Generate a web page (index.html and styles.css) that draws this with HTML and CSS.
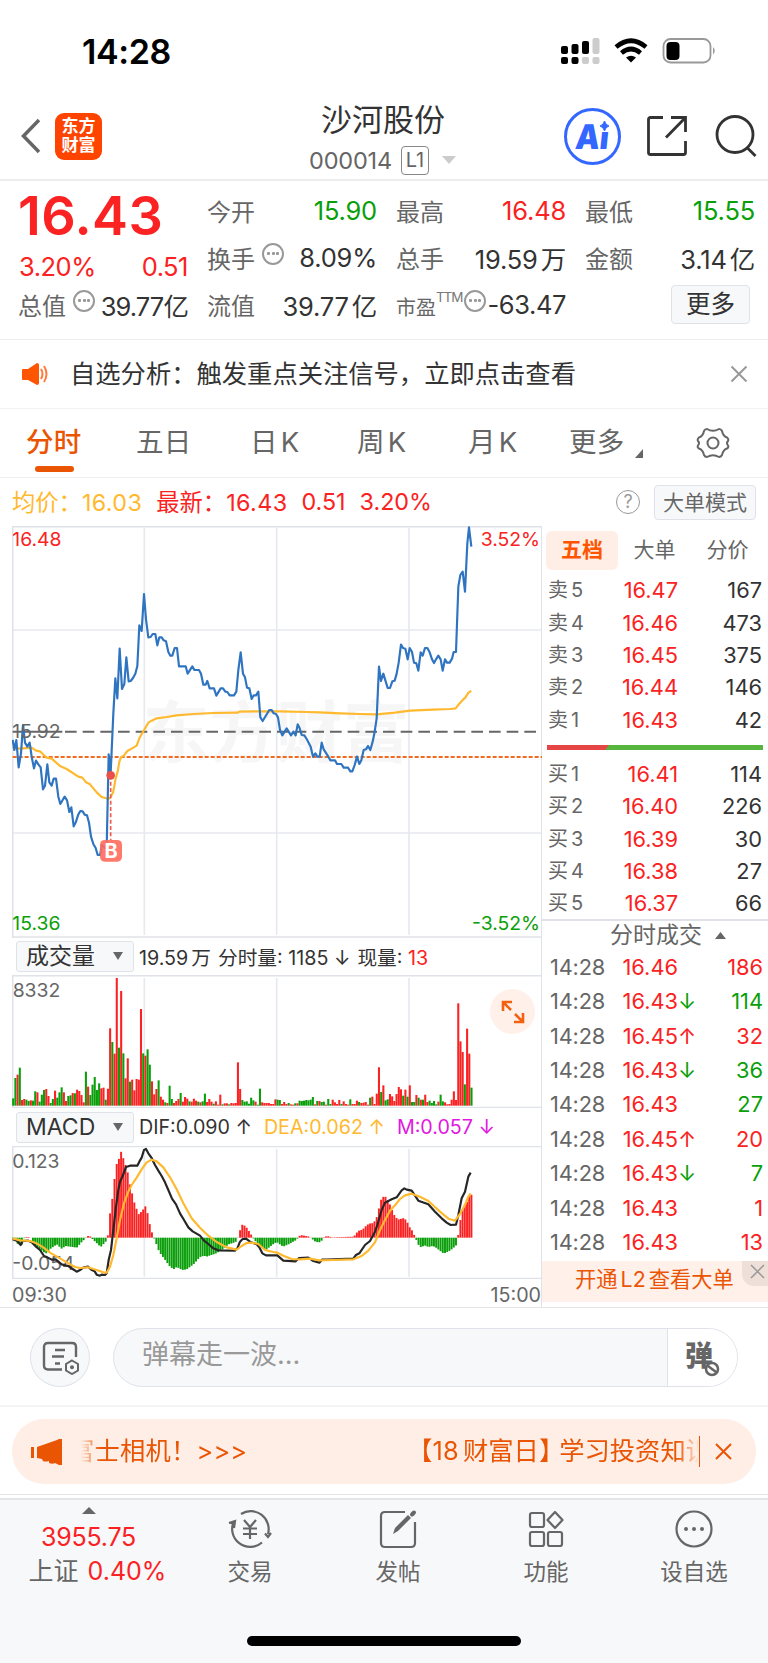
FILE: index.html
```html
<!DOCTYPE html>
<html lang="zh-CN">

<head>
    <meta charset="UTF-8">
    <meta name="viewport" content="width=device-width, initial-scale=1.0">
    <title>沙河股份 000014</title>
    <link rel="stylesheet" href="styles.css">
</head>

<body>
    <div class="status-bar">
        <span class="time">14:28</span>
        <svg class="status-icons" width="156" height="28" viewBox="0 0 156 28">
            <g fill="#000">
                <rect x="1" y="9" width="7" height="8" rx="2" />
                <rect x="11.500" y="7" width="7" height="10" rx="2" />
                <rect x="22" y="4" width="7" height="13" rx="2" />
                <rect x="1" y="20" width="7" height="7" rx="2" />
                <rect x="11.500" y="20" width="7" height="7" rx="2" />
            </g>
            <g fill="#ccc">
                <rect x="32.500" y="1" width="7" height="16" rx="2" />
                <rect x="22" y="20" width="7" height="7" rx="2" />
                <rect x="32.500" y="20" width="7" height="7" rx="2" />
            </g>
            <g fill="none" stroke="#000" stroke-width="4.600">
                <path d="M56 10 Q71 -2.500 86 10" />
                <path d="M61.500 16 Q71 8 80.500 16" />
            </g>
            <path d="M66 20.500 Q71 17 76 20.500 L71 25.500 Z" />
            <rect x="103.500" y="2" width="47" height="23.500" rx="7" fill="none" stroke="#999" stroke-width="1.800" />
            <rect x="106.500" y="5" width="13" height="18" rx="4" />
            <path d="M153 10 Q156.500 13.500 153 17.500 Z" fill="#999" />
        </svg>
    </div>

    <div class="header">
        <div class="header-left">
            <svg width="20" height="36" viewBox="0 0 20 36" fill="none" stroke="#666" stroke-width="3.500">
                <path d="M18 2 L2.500 18 L18 34" />
            </svg>
            <div class="logo">东方<br>财富</div>
        </div>
        <div class="header-title">
            <h1>沙河股份</h1>
            <div class="code">
                <span>000014</span>
                <span class="level">L1</span>
                <svg width="14" height="8" viewBox="0 0 14 8"><path d="M0 0 H14 L7 8 Z" fill="#ccc" /></svg>
            </div>
        </div>
        <div class="header-right">
            <div class="ai">
                <span>Ai</span>
                <svg class="spark" width="11" height="12" viewBox="0 0 11 12"><path d="M5.500 1 Q6.500 5 10 6 Q6.500 7 5.500 11 Q4.500 7 1 6 Q4.500 5 5.500 1 Z" fill="#3367ff" stroke="#3367ff" /></svg>
            </div>
            <svg width="42" height="42" viewBox="0 0 42 42" fill="none" stroke="#333" stroke-width="2.800">
                <path d="M17 2.500 H4.500 Q2.500 2.500 2.500 4.500 V37.500 Q2.500 39.500 4.500 39.500 H37.500 Q39.500 39.500 39.500 37.500 V26" />
                <path d="M25 2.500 H39.500 V17 M39.500 2.500 L20 22.500" />
            </svg>
            <svg width="44" height="42" viewBox="0 0 44 42" fill="none" stroke="#333" stroke-width="2.800">
                <circle cx="21" cy="19.500" r="18" />
                <path d="M33 32.500 L41.500 41" />
            </svg>
        </div>
    </div>

    <div class="quote">
        <div class="quote-main">
            <div class="price">16.43</div>
            <div class="change"><span>3.20%</span><span>0.51</span></div>
            <div class="cell"><label>总值</label><i class="more-dot"></i><b>39.77亿</b></div>
        </div>
        <div class="quote-grid">
            <div class="cell"><label>今开</label><b class="green">15.90</b></div>
            <div class="cell"><label>最高</label><b class="red">16.48</b></div>
            <div class="cell"><label>最低</label><b class="green">15.55</b></div>
            <div class="cell"><label>换手</label><i class="more-dot"></i><b>8.09%</b></div>
            <div class="cell"><label>总手</label><b>19.59<span class="unit">万</span></b></div>
            <div class="cell"><label>金额</label><b>3.14<span class="unit">亿</span></b></div>
            <div class="cell"><label>流值</label><b>39.77<span class="unit">亿</span></b></div>
            <div class="cell pe"><label>市盈</label><sup>TTM</sup><i class="more-dot"></i><b>-63.47</b></div>
            <div class="cell"><button class="btn-more">更多</button></div>
        </div>
    </div>

    <div class="notice">
        <svg width="28" height="24" viewBox="0 0 28 24">
            <path d="M1 7 H6 L15 1 Q17 1 17 3 V21 Q17 23 15 23 L6 18 H1 Q0 18 0 17 V8 Q0 7 1 7 Z" fill="#ff5500" />
            <path d="M19 7 Q22 12 19 17 M22 4 Q27 12 22 20" fill="none" stroke="#ff7a3c" stroke-width="2" />
        </svg>
        <span>自选分析：触发重点关注信号，立即点击查看</span>
        <svg width="18" height="18" viewBox="0 0 18 18" stroke="#999" stroke-width="2"><path d="M1.500 1.500 L16.500 16.500 M16.500 1.500 L1.500 16.500" /></svg>
    </div>

    <div class="tabs">
        <span class="tab active">分时</span>
        <span class="tab">五日</span>
        <span class="tab">日<span class="unit">K</span></span>
        <span class="tab">周<span class="unit">K</span></span>
        <span class="tab">月<span class="unit">K</span></span>
        <span class="tab">更多<svg width="8" height="9" viewBox="0 0 8 9"><path d="M8 0 V9 H0 Z" fill="#666" /></svg></span>
        <svg class="gear" width="34" height="32" viewBox="0 0 34 32" fill="none" stroke="#666" stroke-width="2">
            <path d="M11 2 Q17 5.500 23 2 Q25 2 26 4 Q27 9 31 10.500 Q33 12 32 14 Q30 16 32 18.500 Q33 20.500 31 21.500 Q27 23 26 28 Q25 30 23 30 Q17 26.500 11 30 Q9 30 8 28 Q7 23 3 21.500 Q1 20.500 2 18.500 Q4 16 2 14 Q1 12 3 10.500 Q7 9 8 4 Q9 2 11 2 Z" />
            <circle cx="17" cy="16" r="5.500" />
        </svg>
    </div>

    <div class="summary">
        <span class="avg">均价：<span class="num">16.03</span></span>
        <span class="red">最新：<span class="num">16.43</span></span>
        <span class="red">0.51</span>
        <span class="red">3.20%</span>
        <i class="help">?</i>
        <button class="btn-mode">大单模式</button>
    </div>

    <div class="market">
        <div class="charts">
            <!-- chart units: 3 per pixel -->
            <svg class="chart" width="530" height="412" viewBox="36 18 1590 1236">
                <text class="watermark" x="428" y="712">东方财富</text>
                <g class="grid">
                    <path d="M38 330 H1624 M38 939 H1624 M433 24 V1245 M830 24 V1245 M1227 24 V1245" />
                    <path class="frame" d="M38 1254 V20 H1626 M38 1251 H1626" />
                </g>
                <path d="M195 635 H1615" stroke="#666" stroke-width="6" stroke-dasharray="35 18" />
                <path d="M38 635 H187" stroke="#666" stroke-width="6" />
                <path d="M38 711 H1626" stroke="#f26a21" stroke-width="6" stroke-dasharray="12 6" />
                <polyline class="line avg-line" points="38,683 60,686 95,683 108,692 120,694 140,713 155,716 180,738 200,747 235,770 247,773 258,787 270,793 290,817 305,831 318,835 330,835 340,815 347,775 353,755 358,725 363,712 372,706 382,693 395,686 410,677 418,655 430,634 445,608 455,602 470,595 500,591 530,586 580,582 640,579 712,578 718,575 780,574 840,574 920,576 960,577 1020,580 1080,582 1130,583 1185,578 1230,572 1300,569 1350,567 1367,565 1377,552 1389,539 1396,533 1405,518 1414,513" />
                <polyline class="line price-line" points="38,660 43,690 49,660 56,742 63,700 69,615 75,668 82,680 89,668 95,710 102,745 108,722 115,733 122,742 129,808 135,797 142,733 148,787 155,797 161,776 168,776 175,830 181,852 188,840 194,830 201,841 208,876 214,862 221,919 228,905 235,883 241,873 248,874 254,884 261,886 267,908 273,950 280,972 287,984 293,1005 300,1005 306,975 313,982 320,985 326,703 332,760 340,580 346,475 352,535 359,386 366,507 373,492 379,412 386,484 392,483 399,474 406,461 412,438 418,316 425,333 432,222 438,298 445,352 452,351 458,342 466,342 472,376 478,352 485,352 491,361 498,364 505,396 511,407 517,407 524,384 531,384 537,439 557,439 563,461 577,439 583,450 597,450 603,461 610,494 617,494 622,483 629,505 642,505 649,527 662,505 669,505 676,515 682,516 689,526 702,526 709,515 715,450 722,397 729,461 735,472 741,503 748,505 755,537 761,526 768,526 775,515 781,592 788,603 808,570 815,570 821,580 828,582 834,592 840,630 847,646 860,625 873,646 880,635 887,646 893,613 899,625 905,645 913,646 920,657 932,680 939,710 946,700 952,710 959,710 965,668 971,688 985,710 991,721 1005,721 1011,732 1024,732 1031,743 1044,743 1051,754 1057,754 1064,735 1071,710 1078,732 1084,721 1091,690 1098,688 1104,678 1111,690 1118,665 1124,635 1130,595 1137,440 1143,483 1150,461 1157,484 1163,504 1170,504 1177,484 1184,482 1190,461 1196,428 1203,374 1209,384 1216,386 1223,418 1229,384 1236,396 1242,428 1249,430 1255,452 1262,397 1268,407 1275,384 1282,384 1289,397 1296,418 1302,429 1308,418 1315,407 1322,418 1328,452 1335,418 1341,428 1349,428 1356,416 1361,396 1368,396 1375,200 1381,165 1388,155 1395,215 1402,70 1407,22 1414,80" />
                <path d="M332 766 V960" stroke="#f25a4e" stroke-width="5" stroke-dasharray="12 7" />
                <circle cx="332" cy="766" r="13" fill="#ea4f4a" />
                <rect x="300" y="960" width="66" height="65" rx="14" fill="#ff6a5c" fill-opacity=".9" />
                <text x="333" y="1015" text-anchor="middle" class="buy-mark">B</text>
                <text class="axis up" x="37" y="77">16.48</text>
                <text class="axis" x="37" y="654">15.92</text>
                <text class="axis down" x="37" y="1229">15.36</text>
                <text class="axis up" x="1620" y="77" text-anchor="end">3.52%</text>
                <text class="axis down" x="1620" y="1229" text-anchor="end">-3.52%</text>
            </svg>

            <div class="indicator">
                <div class="select">成交量<i></i></div>
                <span>19.59<span class="unit">万</span></span>
                <span>分时量: 1185 ↓</span>
                <span>现量: <em>13</em></span>
            </div>
            <div class="chart-wrap">
                <svg class="chart" width="530" height="133" viewBox="36 135 1590 399">
                    <g class="grid">
                        <path d="M433 144 V527 M830 144 V527 M1227 144 V527" />
                        <path class="frame" d="M38 534 V137 H1626 M38 533 H1626" />
                    </g>
                    <g id="volume"></g>
                    <text class="axis" x="38" y="201">8332</text>
                </svg>
                <div class="expand">
                    <svg width="24" height="24" viewBox="0 0 24 24" fill="none" stroke="#f26010" stroke-width="2.600">
                        <path d="M2 11 V2 H11 M2 2 L10 10 M22 13 V22 H13 M22 22 L14 14" />
                    </svg>
                </div>
            </div>

            <div class="indicator macd">
                <div class="select">MACD<i></i></div>
                <span>DIF:0.090 ↑</span>
                <span class="avg">DEA:0.062 ↑</span>
                <span class="magenta">M:0.057 ↓</span>
            </div>
            <svg class="chart" width="530" height="133" viewBox="36 648 1590 399">
                <g class="grid">
                    <path d="M433 657 V1040 M830 657 V1040 M1227 657 V1040" />
                    <path class="frame" d="M38 1047 V649 H1626 M38 1046 H1626" />
                </g>
                <g id="macd"></g>
                <text class="axis" x="37" y="714">0.123</text>
                <text class="axis" x="37" y="1020">-0.054</text>
                <polyline class="line dif" points="38,928 52,933 62,945 68,933 85,932 95,937 108,950 120,960 132,978 142,982 155,989 167,988 185,1003 205,1008 218,1017 230,1025 240,1020 250,1013 264,1010 274,1019 284,1024 290,1034 300,1037 305,1034 315,1035 320,1030 326,990 333,960 340,900 348,830 355,780 360,755 368,738 378,711 390,707 412,707 418,695 425,683 432,660 438,657 445,670 455,684 465,705 475,722 485,738 495,757 505,780 516,806 528,823 540,850 552,870 565,892 578,904 600,917 612,932 625,942 640,955 655,961 705,962 712,955 720,935 728,927 738,926 750,935 770,943 778,952 787,970 798,976 832,976 850,992 887,994 897,984 925,983 940,993 958,998 966,989 980,989 1060,986 1068,975 1078,970 1095,945 1110,933 1125,905 1132,885 1145,840 1155,818 1175,808 1190,802 1205,781 1213,775 1220,779 1235,782 1255,812 1285,823 1305,845 1325,865 1340,878 1352,885 1368,884 1375,855 1385,805 1395,785 1405,740 1412,728" />
                <polyline class="line avg-line" points="38,925 60,931 90,933 110,940 130,952 150,968 175,982 200,997 225,1011 240,1014 264,1012 290,1020 310,1027 320,1028 330,1010 340,975 350,925 360,870 372,820 385,785 395,765 410,743 425,718 440,697 455,689 470,694 490,712 510,742 530,778 550,820 575,865 600,893 625,917 650,936 680,952 710,959 725,948 740,939 755,938 775,942 795,960 820,966 832,968 850,977 875,987 900,988 930,986 958,991 1000,990 1060,988 1085,978 1105,962 1125,937 1140,900 1155,870 1170,842 1185,826 1200,807 1215,796 1235,791 1260,800 1285,813 1320,845 1345,866 1365,872 1380,852 1395,825 1405,800 1412,790" />
            </svg>
            <div class="hours"><span>09:30</span><span>15:00</span></div>
        </div>

        <div class="side">
            <div class="side-tabs">
                <span class="on">五档</span>
                <span>大单</span>
                <span>分价</span>
            </div>
            <div class="book">
                <div class="level-row"><span>卖5</span><b>16.47</b><em>167</em></div>
                <div class="level-row"><span>卖4</span><b>16.46</b><em>473</em></div>
                <div class="level-row"><span>卖3</span><b>16.45</b><em>375</em></div>
                <div class="level-row"><span>卖2</span><b>16.44</b><em>146</em></div>
                <div class="level-row"><span>卖1</span><b>16.43</b><em>42</em></div>
            </div>
            <svg class="ratio" width="216" height="5" viewBox="0 0 216 5">
                <rect width="216" height="5" fill="#55b53c" />
                <path d="M0 0 H62 L58 5 H0 Z" fill="#e54545" />
            </svg>
            <div class="book">
                <div class="level-row"><span>买1</span><b>16.41</b><em>114</em></div>
                <div class="level-row"><span>买2</span><b>16.40</b><em>226</em></div>
                <div class="level-row"><span>买3</span><b>16.39</b><em>30</em></div>
                <div class="level-row"><span>买4</span><b>16.38</b><em>27</em></div>
                <div class="level-row"><span>买5</span><b>16.37</b><em>66</em></div>
            </div>
            <div class="deals-title">分时成交 <svg width="11" height="7" viewBox="0 0 11 7"><path d="M5.500 0 L11 7 H0 Z" fill="#666" /></svg></div>
            <div class="deals">
                <div class="deal"><span>14:28</span><b>16.46</b><i></i><em class="red">186</em></div>
                <div class="deal"><span>14:28</span><b>16.43</b><i class="green">↓</i><em class="green">114</em></div>
                <div class="deal"><span>14:28</span><b>16.45</b><i class="red">↑</i><em class="red">32</em></div>
                <div class="deal"><span>14:28</span><b>16.43</b><i class="green">↓</i><em class="green">36</em></div>
                <div class="deal"><span>14:28</span><b>16.43</b><i></i><em class="green">27</em></div>
                <div class="deal"><span>14:28</span><b>16.45</b><i class="red">↑</i><em class="red">20</em></div>
                <div class="deal"><span>14:28</span><b>16.43</b><i class="green">↓</i><em class="green">7</em></div>
                <div class="deal"><span>14:28</span><b>16.43</b><i></i><em class="red">1</em></div>
                <div class="deal"><span>14:28</span><b>16.43</b><i></i><em class="red">13</em></div>
            </div>
            <div class="promo">
                开通<span class="unit">L2</span><span class="unit">查看大单</span>
                <div class="promo-close">
                    <svg width="15" height="15" viewBox="0 0 15 15" stroke="#999" stroke-width="1.500"><path d="M1 1 L14 14 M14 1 L1 14" /></svg>
                </div>
            </div>
        </div>
    </div>

    <div class="danmu">
        <div class="danmu-set">
            <svg width="38" height="34" viewBox="0 0 38 34" fill="none" stroke="#666" stroke-width="2.400">
                <path d="M20 28.500 H6 Q2 28.500 2 24.500 V6 Q2 2 6 2 H30 Q34 2 34 6 V16" />
                <path d="M13 9 H23 M10 15.500 H22 M13 22.500 H18" />
                <path d="M30 19.500 L36 23 V29.500 L30 33 L24 29.500 V23 Z" stroke-width="2" />
                <circle cx="30" cy="26.300" r="2" fill="#666" stroke="none" />
            </svg>
        </div>
        <div class="danmu-input">
            <span>弹幕走一波...</span>
            <div class="danmu-switch">
                弹
                <svg width="16" height="16" viewBox="0 0 16 16"><circle cx="8" cy="8" r="6" fill="#fff" stroke="#666" stroke-width="2.600" /><path d="M4 5 L12 11" stroke="#666" stroke-width="2.600" /></svg>
            </div>
        </div>
    </div>

    <div class="banner-wrap">
        <div class="banner">
            <svg width="32" height="28" viewBox="0 0 32 28" fill="#ea5504">
                <path d="M0 9 H3 V20 H0 Z M6 9 L26 2 L28 1 H31 V27 H28 L24 25 Q22 26.500 18 25 V23 Q14 24 12 23 L11 21 L6 20 Z" />
            </svg>
            <div class="marquee">
                <span class="msg-a">富士相机！&gt;&gt;&gt;</span>
                <span class="msg-b">【<span class="day">18</span>财富日<span class="bracket">】</span>学习投资知识</span>
            </div>
            <svg class="banner-close" width="17" height="17" viewBox="0 0 17 17" stroke="#ea5504" stroke-width="2"><path d="M1 1 L16 16 M16 1 L1 16" /></svg>
        </div>
    </div>

    <div class="nav">
        <div class="nav-index">
            <svg width="14" height="7" viewBox="0 0 14 7"><path d="M7 0 L14 7 H0 Z" fill="#666" /></svg>
            <b>3955.75</b>
            <span>上证 <b>0.40%</b></span>
        </div>
        <div class="nav-item">
            <svg width="44" height="40" viewBox="0 0 44 40" fill="none" stroke="#666" stroke-width="2.200">
                <path d="M13 5 A18 18 0 0 1 40 25 M37 24.500 L40 28 L43 24 M34 33.500 A18 18 0 0 1 6 12 M1 14 L7 12 L6 19" />
                <path d="M16 11 L22 18 L28 11 M22 18 V30 M15 19.500 H29 M15 25 H29" />
            </svg>
            <span>交易</span>
        </div>
        <div class="nav-item">
            <svg width="44" height="40" viewBox="0 0 44 40" fill="none" stroke="#666" stroke-width="2.200">
                <path d="M29 3 H9 Q5 3 5 7 V34 Q5 38 9 38 H35 Q39 38 39 34 V13" />
                <path d="M17 25 L19 19 L32 6 L35 9 L22 22 Z" fill="#666" stroke="none" />
                <path d="M36 5.500 L38 3.500" stroke-width="4" stroke-linecap="round" />
            </svg>
            <span>发帖</span>
        </div>
        <div class="nav-item">
            <svg width="44" height="40" viewBox="0 0 44 40" fill="none" stroke="#666" stroke-width="2.200">
                <rect x="6" y="4" width="14" height="14" rx="2" />
                <rect x="6" y="23" width="14" height="14" rx="2" />
                <rect x="24" y="23" width="14" height="14" rx="2" />
                <path d="M31 3 L38.500 11 L31 19 L23.500 11 Z" stroke-linejoin="round" />
            </svg>
            <span>功能</span>
        </div>
        <div class="nav-item">
            <svg width="44" height="40" viewBox="0 0 44 40" fill="none" stroke="#666" stroke-width="2.200">
                <circle cx="22" cy="20" r="17.500" />
                <g fill="#666" stroke="none"><circle cx="14" cy="20" r="2" /><circle cx="22" cy="20" r="2" /><circle cx="30" cy="20" r="2" /></g>
            </svg>
            <span>设自选</span>
        </div>
    </div>
    <div class="home-bar"></div>

    <script src="chart.js"></script>
</body>

</html>
```

FILE: styles.css
```css
* {
    box-sizing: border-box;
}

body {
    margin: 0;
    width: 768px;
    height: 1663px;
    overflow: hidden;
    background: #fff;
    color: #333;
    font-family: Inter, "Noto Sans CJK SC", sans-serif;
}

svg {
    display: block;
    flex: none;
}

b, em, i {
    font-weight: normal;
    font-style: normal;
}

button {
    padding: 0;
    font-family: inherit;
    background: #f7f8fa;
    border: 1px solid #dfe2e8;
    border-radius: 4px;
}

.red {
    color: #fa2222;
}

.green {
    color: #0a9f0a;
}

.avg {
    color: #ffb92e;
}

.magenta {
    color: #e018e0;
}

/* gap between chinese and latin text */
.unit {
    margin-left: 3px;
}

/* status bar */
.status-bar {
    height: 90px;
    padding: 37px 52px 0 82px;
    display: flex;
    justify-content: space-between;
}

.time {
    font-size: 34px;
    line-height: 29px;
    font-weight: 600;
    letter-spacing: -0.4px;
    color: #000;
}

/* header */
.header {
    height: 91px;
    padding: 2px 10px 0 21px;
    border-bottom: 2px solid #ececec;
    display: grid;
    grid-template-columns: 221px 1fr 200px;
}

.header-left {
    display: flex;
    align-items: center;
    gap: 14px;
}

.logo {
    width: 47px;
    height: 47px;
    border-radius: 9px;
    background: #ff4400;
    color: #fff;
    font-size: 17px;
    line-height: 19px;
    font-weight: 700;
    text-align: center;
    padding-top: 4px;
}

.header-title {
    text-align: center;
    padding-top: 7px;
}

h1 {
    margin: 0 0 0 -34px;
    font-size: 31px;
    line-height: 41px;
    font-weight: 400;
}

.code {
    display: flex;
    align-items: center;
    justify-content: center;
    gap: 9px;
    height: 40px;
    margin-left: -35px;
    font-size: 23.500px;
    letter-spacing: -0.2px;
    color: #666;
}

.code svg {
    margin-left: 4px;
}

.level {
    width: 28px;
    height: 29px;
    border: 1.5px solid #888;
    border-radius: 4px;
    font-size: 20px;
    line-height: 27px;
}

.header-right {
    display: flex;
    align-items: center;
    justify-content: flex-end;
    gap: 25px;
}

.header-right > svg:last-child {
    margin-left: 1px;
}

.ai {
    position: relative;
    width: 57px;
    height: 57px;
    border: 3px solid #3367ff;
    border-radius: 50%;
    color: #3367ff;
    font-size: 34px;
    line-height: 51px;
    font-weight: 900;
    text-align: center;
}

.ai span {
    display: block;
    transform: skewX(-6deg) scaleX(0.9);
}

.spark {
    position: absolute;
    left: 32px;
    top: 9px;
    background: #fff;
}

/* quote */
.quote {
    height: 159px;
    padding: 7px 13px 0 19px;
    border-bottom: 1px solid #eee;
    display: grid;
    grid-template-columns: 169px 1fr;
    gap: 20px;
}

.quote-main .price {
    height: 54px;
    font-size: 54px;
    line-height: 55px;
    font-weight: 600;
    letter-spacing: 0.4px;
    color: #fa2222;
    margin-left: -1px;
}

.quote-main .change {
    display: flex;
    justify-content: space-between;
    height: 40px;
    line-height: 49px;
    font-size: 25.500px;
    letter-spacing: -0.5px;
    color: #fa2222;
}

.quote-grid {
    display: grid;
    grid-template-columns: repeat(3, 169px);
    grid-auto-rows: 47px;
    column-gap: 20px;
}

.cell {
    display: flex;
    align-items: center;
    height: 47px;
    padding-bottom: 2px;
    font-size: 25.500px;
    letter-spacing: -0.2px;
    white-space: nowrap;
}

.cell label {
    font-size: 24px;
    letter-spacing: 0;
    margin-left: -1px;
    color: #666;
}

.cell b {
    margin-left: auto;
}

.quote-main .cell {
    letter-spacing: -0.9px;
}

.more-dot {
    width: 22px;
    height: 22px;
    margin: -8px 0 0 7px;
    border: 2px solid #999;
    border-radius: 50%;
    background: radial-gradient(circle, #999 1.3px, transparent 1.8px) center / 5px 5px no-repeat,
        radial-gradient(circle, #999 1.3px, transparent 1.8px) 2px center / 5px 5px no-repeat,
        radial-gradient(circle, #999 1.3px, transparent 1.8px) 11px center / 5px 5px no-repeat;
}

.pe label {
    font-size: 20px;
    margin-top: 3px;
}

.pe sup {
    font-size: 13.500px;
    letter-spacing: -1.1px;
    color: #777;
    margin-top: -16px;
    line-height: 14px;
}

.pe .more-dot {
    margin-left: 2px;
}

.pe b {
    letter-spacing: -0.4px;
}

.btn-more {
    width: 79px;
    height: 39px;
    margin: 0 5px 0 auto;
    font-size: 24.500px;
    line-height: 35px;
    color: #333;
}

/* notice */
.notice {
    height: 69px;
    padding: 0 20px 0 22px;
    border-bottom: 1px solid #f2f2f2;
    display: flex;
    align-items: center;
    font-size: 25.300px;
}

.notice span {
    margin: -4px auto 0 20px;
}

/* tabs */
.tabs {
    height: 69px;
    padding-left: 26px;
    border-bottom: 1px solid #eee;
    display: grid;
    grid-template-columns: 110px 114px 107px 111px 101px 127px 1fr;
    align-items: center;
    font-size: 27.500px;
    color: #666;
}

.tab {
    position: relative;
    display: flex;
    align-items: flex-end;
    letter-spacing: 0.3px;
    line-height: 38px;
    padding-bottom: 2px;
}

.tab svg {
    margin: 0 0 3px 10px;
}

.active {
    color: #ea5504;
    font-weight: 500;
}

.active::after {
    content: "";
    position: absolute;
    left: 9px;
    bottom: -9px;
    width: 39px;
    height: 6px;
    border-radius: 3px;
    background: #ea5504;
}

/* summary line */
.summary {
    height: 48px;
    padding: 0 12px 2px 12px;
    display: flex;
    align-items: center;
    gap: 14px;
    font-size: 23.300px;
}

.num {
    letter-spacing: 0.4px;
}

.help {
    width: 24px;
    height: 24px;
    margin: 2px 0 0 auto;
    border: 1.5px solid #999;
    border-radius: 50%;
    color: #999;
    font-size: 18px;
    line-height: 21px;
    text-align: center;
}

.btn-mode {
    width: 102px;
    height: 35px;
    margin-top: 2px;
    font-size: 21px;
    line-height: 31px;
    color: #666;
}

/* charts */
.market {
    height: 782px;
    display: grid;
    grid-template-columns: 542px 1fr;
    border-bottom: 1px solid #e5e5e5;
}

.charts {
    padding-left: 12px;
    border-right: 1px solid #dfe2ea;
}

.grid {
    fill: none;
    stroke: #e6e9f0;
    stroke-width: 5;
}

.frame {
    stroke: #dfe2e8;
}

.line {
    fill: none;
    stroke-width: 6.5;
    stroke-linejoin: round;
}

.price-line {
    stroke: #2f74c0;
}

.avg-line {
    stroke: #ffb92e;
}

.dif {
    stroke: #262626;
}

.axis {
    font-size: 58px;
    fill: #666;
}

.up {
    fill: #fa2222;
}

.down {
    fill: #0a9f0a;
}

.watermark {
    font-size: 200px;
    font-weight: 700;
    fill: #f6f6f6;
}

.buy-mark {
    font-size: 60px;
    font-weight: 700;
    fill: #fff;
}

.chart-wrap {
    position: relative;
}

.expand {
    position: absolute;
    right: 6px;
    top: 14px;
    width: 45px;
    height: 45px;
    border-radius: 50%;
    background: #fff0ea;
    display: flex;
    align-items: center;
    justify-content: center;
}

.indicator {
    height: 37px;
    padding: 0 0 1px 4px;
    display: flex;
    align-items: center;
    font-size: 19.700px;
    white-space: pre;
}

.indicator > span {
    margin-right: 7px;
}

.indicator em {
    color: #fa2222;
}

.macd {
    height: 38px;
    padding-bottom: 0;
}

.macd > span {
    margin-right: 12px;
}

.select {
    width: 118px;
    height: 31px;
    margin-right: 5px;
    padding: 0 10px 0 9px;
    border: 1px solid #dfe2e8;
    border-radius: 3px;
    background: #f7f8fa;
    display: flex;
    align-items: center;
    justify-content: space-between;
    font-size: 23px;
    line-height: 28px;
}

.select i {
    border: 5px solid transparent;
    border-top: 8px solid #666;
    border-bottom: 0;
}

.hours {
    display: flex;
    justify-content: space-between;
    height: 28px;
    font-size: 19.700px;
    line-height: 32px;
    color: #666;
}

/* order book */
.side {
    display: flex;
    flex-direction: column;
}

.side-tabs {
    height: 48px;
    padding: 5px 0 4px 4px;
    display: flex;
    font-size: 21px;
    line-height: 37px;
    color: #666;
    text-align: center;
}

.side-tabs span {
    width: 73px;
}

.side-tabs .on {
    width: 72px;
    border-radius: 6px;
    background: #ffeee6;
    color: #ff5500;
    font-weight: 700;
}

.level-row,
.deal {
    display: grid;
    grid-template-columns: 56px 74px 1fr;
    height: 32.350px;
    padding: 0 6px 0 6px;
    align-items: center;
    font-size: 21.800px;
}

.level-row span,
.deal span {
    color: #666;
}

.level-row span {
    font-size: 20px;
    line-height: 26px;
    letter-spacing: 3px;
}

.level-row b,
.deal b {
    color: #fa2222;
    text-align: right;
}

.level-row em,
.deal em {
    text-align: right;
}

.ratio {
    margin: 9px 0 8px 5px;
}

.deals-title {
    height: 31px;
    border-top: 2px solid #dfe2e8;
    display: flex;
    align-items: center;
    justify-content: center;
    gap: 13px;
    padding: 0 0 0 26px;
    line-height: 29px;
    font-size: 23px;
    color: #666;
}

.deal {
    grid-template-columns: 59px 69px 15px 1fr;
    height: 34.350px;
    padding: 0 5px 1px 8px;
}

.deal span {
    letter-spacing: -0.2px;
}

.promo {
    position: relative;
    height: 41px;
    margin-top: 1px;
    padding-left: 33px;
    background: #fff0ea;
    color: #ea5504;
    font-size: 21.300px;
    line-height: 36px;
}

.promo-close {
    position: absolute;
    right: 0;
    top: 0;
    width: 26px;
    height: 25px;
    padding: 3px 0 0 8px;
    border-radius: 0 0 0 12px;
    background: #eedfd9;
}

/* danmu */
.danmu {
    height: 99px;
    padding: 20px 30px 0;
    border-bottom: 2px solid #f4f4f6;
    display: flex;
    gap: 23px;
}

.danmu-set {
    width: 60px;
    height: 59px;
    padding-left: 2px;
    border: 1px solid #dfe2ea;
    border-radius: 50%;
    background: #f7f8fa;
    display: flex;
    align-items: center;
    justify-content: center;
}

.danmu-input {
    width: 625px;
    height: 59px;
    border: 1px solid #dfe2ea;
    border-radius: 30px;
    background: #f7f8fa;
    overflow: hidden;
    display: flex;
    justify-content: space-between;
    padding-left: 28px;
    font-size: 27px;
    line-height: 52px;
    color: #999;
}

.danmu-switch {
    position: relative;
    width: 70px;
    padding-left: 17px;
    border-left: 1px solid #dfe2ea;
    background: #fff;
    color: #666;
    font-size: 28px;
    line-height: 54px;
    font-weight: 900;
}

.danmu-switch svg {
    position: absolute;
    left: 36px;
    top: 32px;
}

/* banner */
.banner-wrap {
    height: 88px;
    padding: 12px 12px 0;
    border-bottom: 1px solid #e2e4e8;
}

.banner {
    height: 65px;
    padding: 0 24px 0 19px;
    border-radius: 32px;
    background: #ffeee6;
    color: #ea5504;
    display: flex;
    align-items: center;
    font-size: 25.300px;
}

.marquee {
    width: 618px;
    height: 38px;
    margin-left: 18px;
    overflow: hidden;
    display: flex;
    justify-content: space-between;
    line-height: 36px;
    white-space: nowrap;
    -webkit-mask-image: linear-gradient(90deg, transparent, #000 20px, #000 597px, transparent);
    mask-image: linear-gradient(90deg, transparent, #000 20px, #000 597px, transparent);
}

.msg-a {
    margin-left: -12px;
    letter-spacing: 0.2px;
}

.msg-b {
    margin-right: -12px;
}

.day {
    margin-right: 4px;
    letter-spacing: 0.3px;
}

.bracket {
    margin-right: -5px;
}

.banner-close {
    margin-left: auto;
}

.marquee + .banner-close {
    box-sizing: content-box;
    padding: 7px 0 7px 15px;
    border-left: 1.5px solid #ea5504;
}

/* bottom nav */
.nav {
    height: 120px;
    margin-top: 3px;
    border-top: 2px solid #e2e4e8;
    background: #f7f8fa;
    display: grid;
    grid-template-columns: 176px 148px 148px 148px 148px;
    color: #666;
}

.nav-index {
    display: flex;
    flex-direction: column;
    align-items: center;
    padding: 7px 0 0 1px;
    font-size: 25px;
    letter-spacing: -0.2px;
}

.nav-index b {
    color: #fa2222;
}

.nav-index > b {
    line-height: 34px;
    margin-top: 6px;
}

.nav-index > span {
    line-height: 35px;
    padding-left: 18px;
    letter-spacing: 0;
    word-spacing: 2px;
    white-space: nowrap;
}

.nav-item {
    display: flex;
    flex-direction: column;
    align-items: center;
    padding-top: 9px;
    font-size: 22.500px;
}

.nav-item span {
    line-height: 46px;
}

.home-bar {
    height: 47px;
    padding: 18px 0 0 247px;
    background: #f7f8fa;
}

.home-bar::before {
    content: "";
    display: block;
    width: 274px;
    height: 10px;
    border-radius: 5px;
    background: #000;
}
```

FILE: chart.js
```js
var RED = '#fa2222';
var GREEN = '#0a9f0a';
var STEP = 6.61;

// one bar per minute, r = up, g = down
var volume = 'g22 g83 r93 g114 r17 r20 g18 g14 r16 g15 g43 r40 g12 g33 g47 r50 r29 g8 g20 r45 g24 g40 g55 r40 r14 g29 g31 r38 g37 r48 r44 r32 r10 g102 r57 g32 g63 g86 g47 g67 r52 r54 g18 r51 r232 g191 r156 r383 g174 r344 g157 r82 r142 g72 r78 r46 r80 r78 r290 g157 r150 g169 g123 r73 r34 r50 g76 r27 r18 g10 r8 g60 g20 r8 r14 r20 g38 r12 r26 r21 g13 r12 r21 r15 g12 r10 g13 g36 r11 r20 r12 g6 r13 r3 r33 g4 r7 r7 g4 r8 r7 r8 r130 r50 g17 g12 g13 g6 g24 g16 r12 g3 g51 r10 r8 r8 r8 r5 r5 r19 g18 g17 r5 r11 r5 g8 r4 r3 g7 r7 g15 g14 g15 g17 g16 g18 g26 r4 g14 r14 g11 g12 r3 g20 g5 r18 r10 r5 r17 g5 r13 r5 r3 g19 r5 r5 r15 g11 r8 r9 r11 r3 g24 r27 r5 r36 r115 g41 r61 g16 g19 r35 r28 r14 r35 r56 r49 g30 r48 g27 r61 g11 g11 r32 g24 r18 g18 r33 r11 g15 g8 g14 g4 r12 g33 g13 r10 r4 r5 r18 r43 r17 r307 r193 r161 g64 r231 r156 g54'.split(' ');

// [x, height], bars between are interpolated
var macd = [[39, -3], [45, -5], [52, -18], [65, -22], [71, -2], [78, 2], [91, 2], [98, -15], [111, -28], [124, -38], [137, -48], [150, -34], [170, -20], [184, -33], [197, -25], [230, -30], [243, -15], [256, -2], [263, 5], [270, 4], [276, -3], [283, -10], [302, -28], [322, -6], [329, 68], [335, 103], [342, 167], [348, 218], [355, 231], [362, 260], [368, 243], [382, 200], [388, 165], [395, 137], [401, 110], [415, 70], [428, 82], [434, 98], [441, 80], [447, 48], [454, 20], [461, 0], [467, -14], [474, -35], [481, -48], [494, -65], [507, -84], [520, -95], [530, -88], [546, -97], [560, -95], [580, -80], [600, -58], [612, -54], [619, -57], [646, -48], [665, -37], [685, -20], [705, -14], [711, -8], [718, 15], [724, 39], [731, 38], [738, 32], [751, 13], [757, 1], [764, -8], [777, -24], [797, -37], [817, -21], [830, -13], [836, -18], [849, -27], [869, -18], [882, -10], [889, -7], [896, 4], [902, 8], [928, 3], [935, -2], [941, -9], [948, -13], [963, -14], [967, 0], [981, 5], [995, 1], [1060, 3], [1067, 10], [1073, 20], [1087, 24], [1100, 38], [1113, 44], [1120, 43], [1133, 68], [1140, 110], [1153, 127], [1166, 108], [1179, 75], [1186, 61], [1199, 53], [1206, 60], [1219, 53], [1226, 35], [1239, 17], [1245, 0], [1252, -13], [1258, -29], [1278, -23], [1285, -30], [1291, -25], [1304, -27], [1318, -38], [1331, -48], [1351, -38], [1364, -27], [1371, -20], [1377, 32], [1384, 70], [1390, 95], [1403, 110], [1410, 135], [1416, 125]];

function rect(x, y, w, h, color) {
    return '<rect x="' + x.toFixed(1) + '" y="' + y.toFixed(1) + '" width="' + w + '" height="' + h.toFixed(1) + '" fill="' + color + '"/>';
}

function drawVolume() {
    var html = '';
    volume.forEach(function (v, i) {
        var h = Number(v.slice(1));
        html += rect(36.5 + i * STEP, 527 - h, 6.2, h, v[0] === 'r' ? RED : GREEN);
    });
    document.getElementById('volume').innerHTML = html;
}

function drawMacd() {
    var html = '';
    var k = 0;
    for (var x = 39; x < 1417; x += STEP) {
        while (k < macd.length - 2 && macd[k + 1][0] < x) k++;
        var a = macd[k];
        var b = macd[k + 1];
        var h = a[1] + (b[1] - a[1]) * (x - a[0]) / (b[0] - a[0]);
        html += rect(x - 2.5, h > 0 ? 923 - h : 923, 5.8, Math.abs(h), h > 0 ? RED : GREEN);
    }
    document.getElementById('macd').innerHTML = html;
}

drawVolume();
drawMacd();
```
